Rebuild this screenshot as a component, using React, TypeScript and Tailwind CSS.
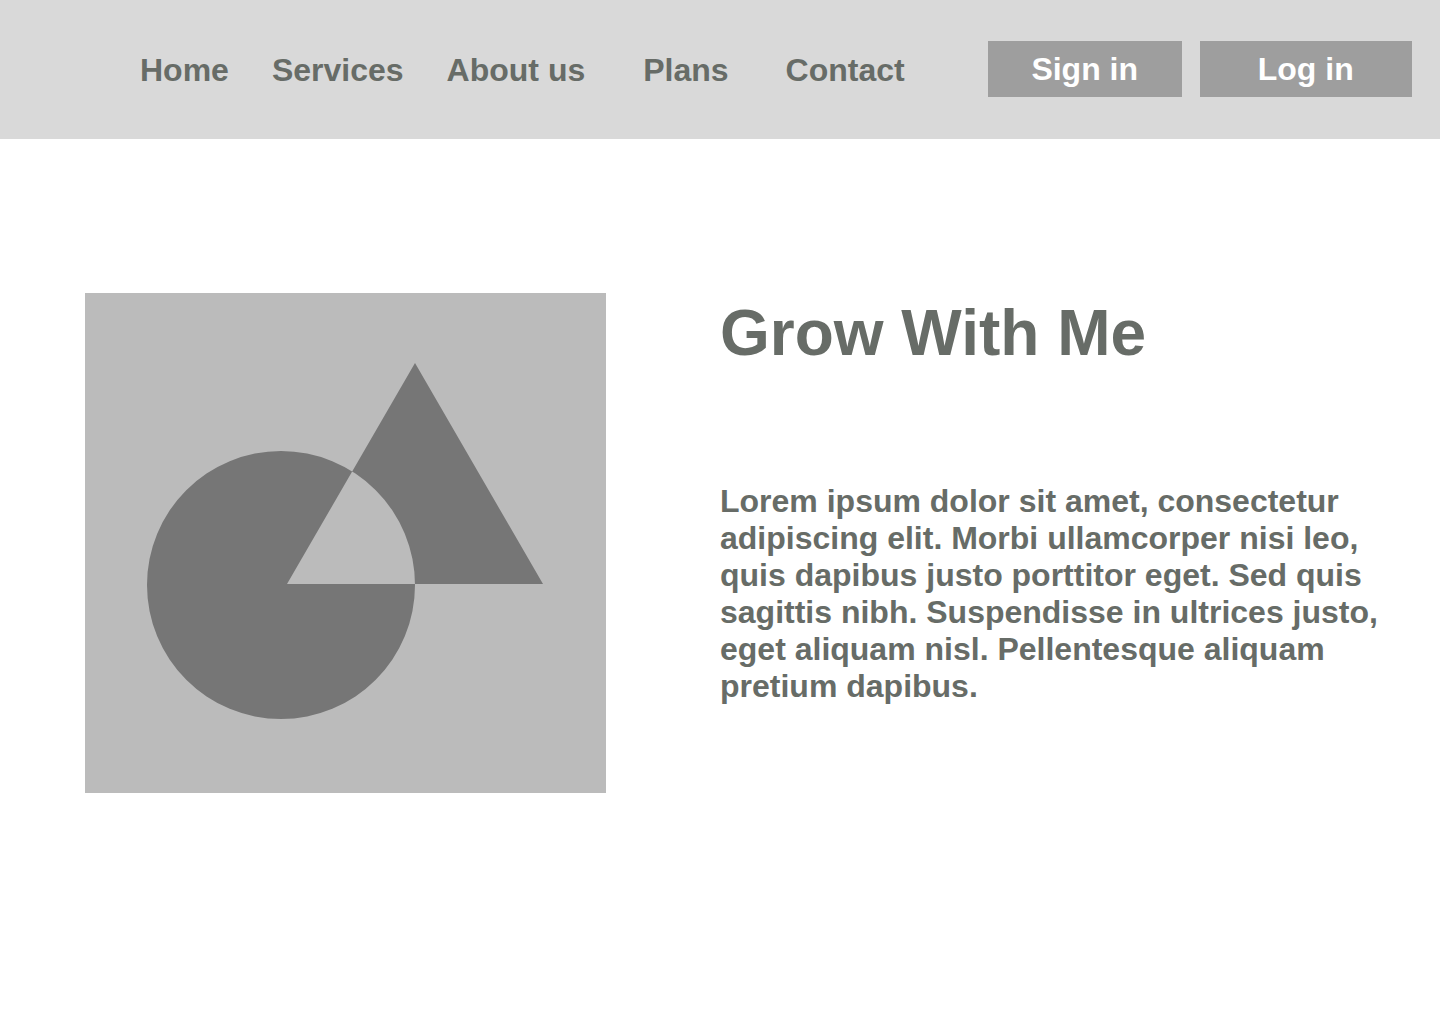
import React from "react";

const font = { fontFamily: '"Liberation Sans", Arial, sans-serif' };

export default function App() {
  return (
    <div className="min-h-[1024px] w-[1440px] bg-white" style={font}>
      <header className="flex h-[139px] items-center bg-[#d9d9d9] text-[32px] font-bold leading-none text-[#676c67]">
        <span className="ml-[140px]">Home</span>
        <span className="ml-[43px]">Services</span>
        <span className="ml-[43px]">About us</span>
        <span className="ml-[58px]">Plans</span>
        <span className="ml-[57px]">Contact</span>
        <button className="ml-[83px] mb-[2px] flex h-[56px] w-[194px] items-center justify-center bg-[#9e9e9e] text-[32px] font-bold text-white">
          Sign in
        </button>
        <button className="ml-[18px] mb-[2px] flex h-[56px] w-[212px] items-center justify-center bg-[#9e9e9e] text-[32px] font-bold text-white">
          Log in
        </button>
      </header>
      <main className="flex pl-[85px] pt-[154px]">
        <div className="h-[500px] w-[521px] shrink-0 bg-[#bbbbbb]">
          <svg width="521" height="500" viewBox="0 0 521 500">
            <path
              fill="#767676"
              fillRule="evenodd"
              d="M 62 292 a 134 134 0 1 0 268 0 a 134 134 0 1 0 -268 0 Z M 202 291 L 330 70 L 458 291 Z"
            />
          </svg>
        </div>
        <div className="ml-[114px] flex w-[680px] flex-col pt-[8px] text-[#676c67]">
          <h1 className="text-[64px] font-bold leading-none">Grow With Me</h1>
          <p className="mt-[118px] text-[32px] font-bold leading-[37px]">
            Lorem ipsum dolor sit amet, consectetur adipiscing elit. Morbi ullamcorper nisi leo, quis dapibus justo porttitor eget. Sed quis sagittis nibh. Suspendisse in ultrices justo, eget aliquam nisl. Pellentesque aliquam pretium dapibus.
          </p>
        </div>
      </main>
    </div>
  );
}
